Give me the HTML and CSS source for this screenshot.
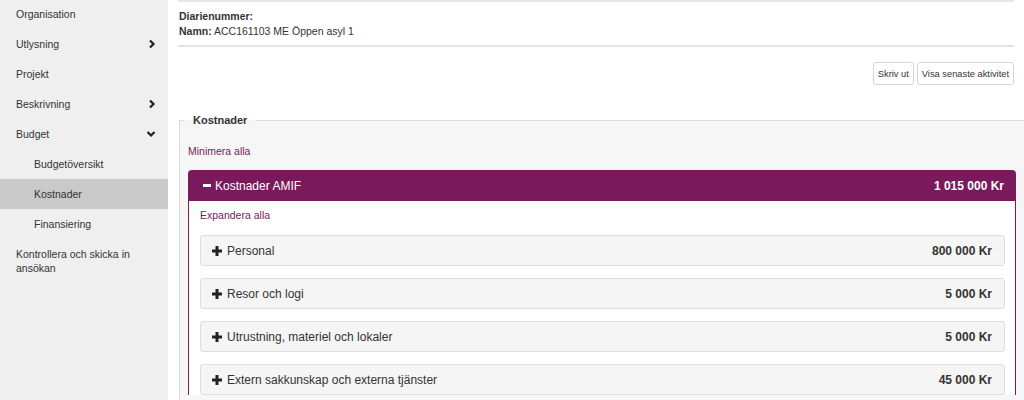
FILE: index.html
```html
<!DOCTYPE html>
<html lang="sv">
<head>
    <meta charset="UTF-8">
    <title>Kostnader</title>
    <link rel="stylesheet" href="styles.css">
</head>
<body>
    <div class="page">
        <nav class="sidebar">
            <a class="nav-item">Organisation</a>
            <a class="nav-item">Utlysning
                <svg class="chev" viewBox="0 0 8 10"><path d="M2 1.5 L5.5 5 L2 8.5" /></svg>
            </a>
            <a class="nav-item">Projekt</a>
            <a class="nav-item">Beskrivning
                <svg class="chev" viewBox="0 0 8 10"><path d="M2 1.5 L5.5 5 L2 8.5" /></svg>
            </a>
            <a class="nav-item">Budget
                <svg class="chev chev-down" viewBox="0 0 10 8"><path d="M1.5 2 L5 5.5 L8.5 2" /></svg>
            </a>
            <a class="nav-item sub">Budgetöversikt</a>
            <a class="nav-item sub active">Kostnader</a>
            <a class="nav-item sub">Finansiering</a>
            <a class="nav-item wrap">Kontrollera och skicka in ansökan</a>
        </nav>

        <main class="main">
            <div class="info-box">
                <div><b>Diarienummer:</b></div>
                <div><b>Namn:</b> ACC161103 ME Öppen asyl 1</div>
            </div>

            <div class="actions">
                <button class="btn">Skriv ut</button>
                <button class="btn">Visa senaste aktivitet</button>
            </div>

            <fieldset class="costs">
                <legend>Kostnader</legend>
                <a class="link top-link">Minimera alla</a>

                <div class="panel">
                    <div class="panel-head">
                        <span class="title"><span class="minus"></span>Kostnader AMIF</span>
                        <span class="amount">1 015 000 Kr</span>
                    </div>
                    <div class="panel-body">
                        <a class="link expand-link">Expandera alla</a>

                        <div class="row">
                            <span class="title"><svg class="plus" viewBox="0 0 10 10"><path d="M5 0 V10 M0 5 H10" /></svg>Personal</span>
                            <span class="amount">800 000 Kr</span>
                        </div>
                        <div class="row">
                            <span class="title"><svg class="plus" viewBox="0 0 10 10"><path d="M5 0 V10 M0 5 H10" /></svg>Resor och logi</span>
                            <span class="amount">5 000 Kr</span>
                        </div>
                        <div class="row">
                            <span class="title"><svg class="plus" viewBox="0 0 10 10"><path d="M5 0 V10 M0 5 H10" /></svg>Utrustning, materiel och lokaler</span>
                            <span class="amount">5 000 Kr</span>
                        </div>
                        <div class="row">
                            <span class="title"><svg class="plus" viewBox="0 0 10 10"><path d="M5 0 V10 M0 5 H10" /></svg>Extern sakkunskap och externa tjänster</span>
                            <span class="amount">45 000 Kr</span>
                        </div>
                    </div>
                </div>
            </fieldset>
        </main>
    </div>
</body>
</html>
```

FILE: styles.css
```css
body {
    margin: 0;
    font-family: 'Liberation Sans', Arial, sans-serif;
    color: #333;
    background: #fff;
    overflow: hidden;
}

.page {
    display: flex;
    height: 400px;
    overflow: hidden;
}

.sidebar {
    width: 168px;
    flex-shrink: 0;
    background-color: #efefef;
    display: flex;
    flex-direction: column;
    margin-top: -1px;
}

.nav-item {
    display: flex;
    align-items: center;
    justify-content: space-between;
    height: 30px;
    padding: 0 12px 0 16px;
    font-size: 10.5px;
    color: #333;
}

.nav-item.sub {
    padding-left: 34px;
}

.nav-item.active {
    background-color: #c9c9c9;
}

.nav-item.wrap {
    height: auto;
    padding-top: 8px;
    line-height: 14px;
}

.chev {
    width: 8px;
    height: 10px;
    fill: none;
    stroke: #222;
    stroke-width: 2.2;
}

.chev-down {
    width: 10px;
    height: 8px;
}

.main {
    flex: 1;
    padding: 0 10px 0 11px;
    min-width: 0;
}

.info-box {
    margin-left: -1px;
    padding: 7px 1px 6px;
    border-top: 2px solid #e6e6e6;
    border-bottom: 2px solid #e3e3e3;
    font-size: 10.5px;
    line-height: 15px;
}

.actions {
    display: flex;
    justify-content: flex-end;
    gap: 3px;
    margin-top: 15px;
}

.btn {
    height: 23px;
    padding: 0 4px;
    border: 1px solid #d6d6d6;
    border-radius: 3px;
    background: #fff;
    font-family: inherit;
    font-size: 9.3px;
    color: #333;
}

.costs {
    margin: 27px -11px 0 0;
    padding: 0 8px;
    border: 1px solid #dcdcdc;
    background-color: #f6f6f6;
    min-width: 0;
}

.costs legend {
    margin-left: -3px;
    padding: 0 8px;
    font-size: 11px;
    font-weight: bold;
    line-height: 16px;
}

.link {
    display: block;
    color: #7a1a5c;
    font-size: 10.5px;
    line-height: 15px;
}

.top-link {
    margin: 16px 0 11px;
}

.panel {
    border: 1px solid #7a1a5c;
    border-bottom: none;
    border-radius: 4px 4px 0 0;
    background: #fff;
}

.panel-head {
    display: flex;
    align-items: center;
    justify-content: space-between;
    height: 30px;
    padding: 0 11px 0 14px;
    background-color: #7a1a5c;
    color: #fff;
}

.panel-head .title {
    font-size: 12px;
}

.minus {
    display: inline-block;
    width: 8px;
    height: 3px;
    margin-right: 4px;
    vertical-align: 3px;
    background: #fff;
}

.amount {
    font-size: 12px;
    font-weight: bold;
}

.panel-body {
    padding: 7px 10px 0 11px;
}

.expand-link {
    margin-bottom: 12px;
}

.row {
    display: flex;
    align-items: center;
    justify-content: space-between;
    height: 29px;
    margin-bottom: 12px;
    padding: 0 12px 0 11px;
    border: 1px solid #dedede;
    border-radius: 3px;
    background-color: #f5f5f5;
    font-size: 12px;
}

.plus {
    width: 10px;
    height: 10px;
    margin-right: 5px;
    vertical-align: -1px;
    fill: none;
    stroke: #222;
    stroke-width: 3;
}
```
